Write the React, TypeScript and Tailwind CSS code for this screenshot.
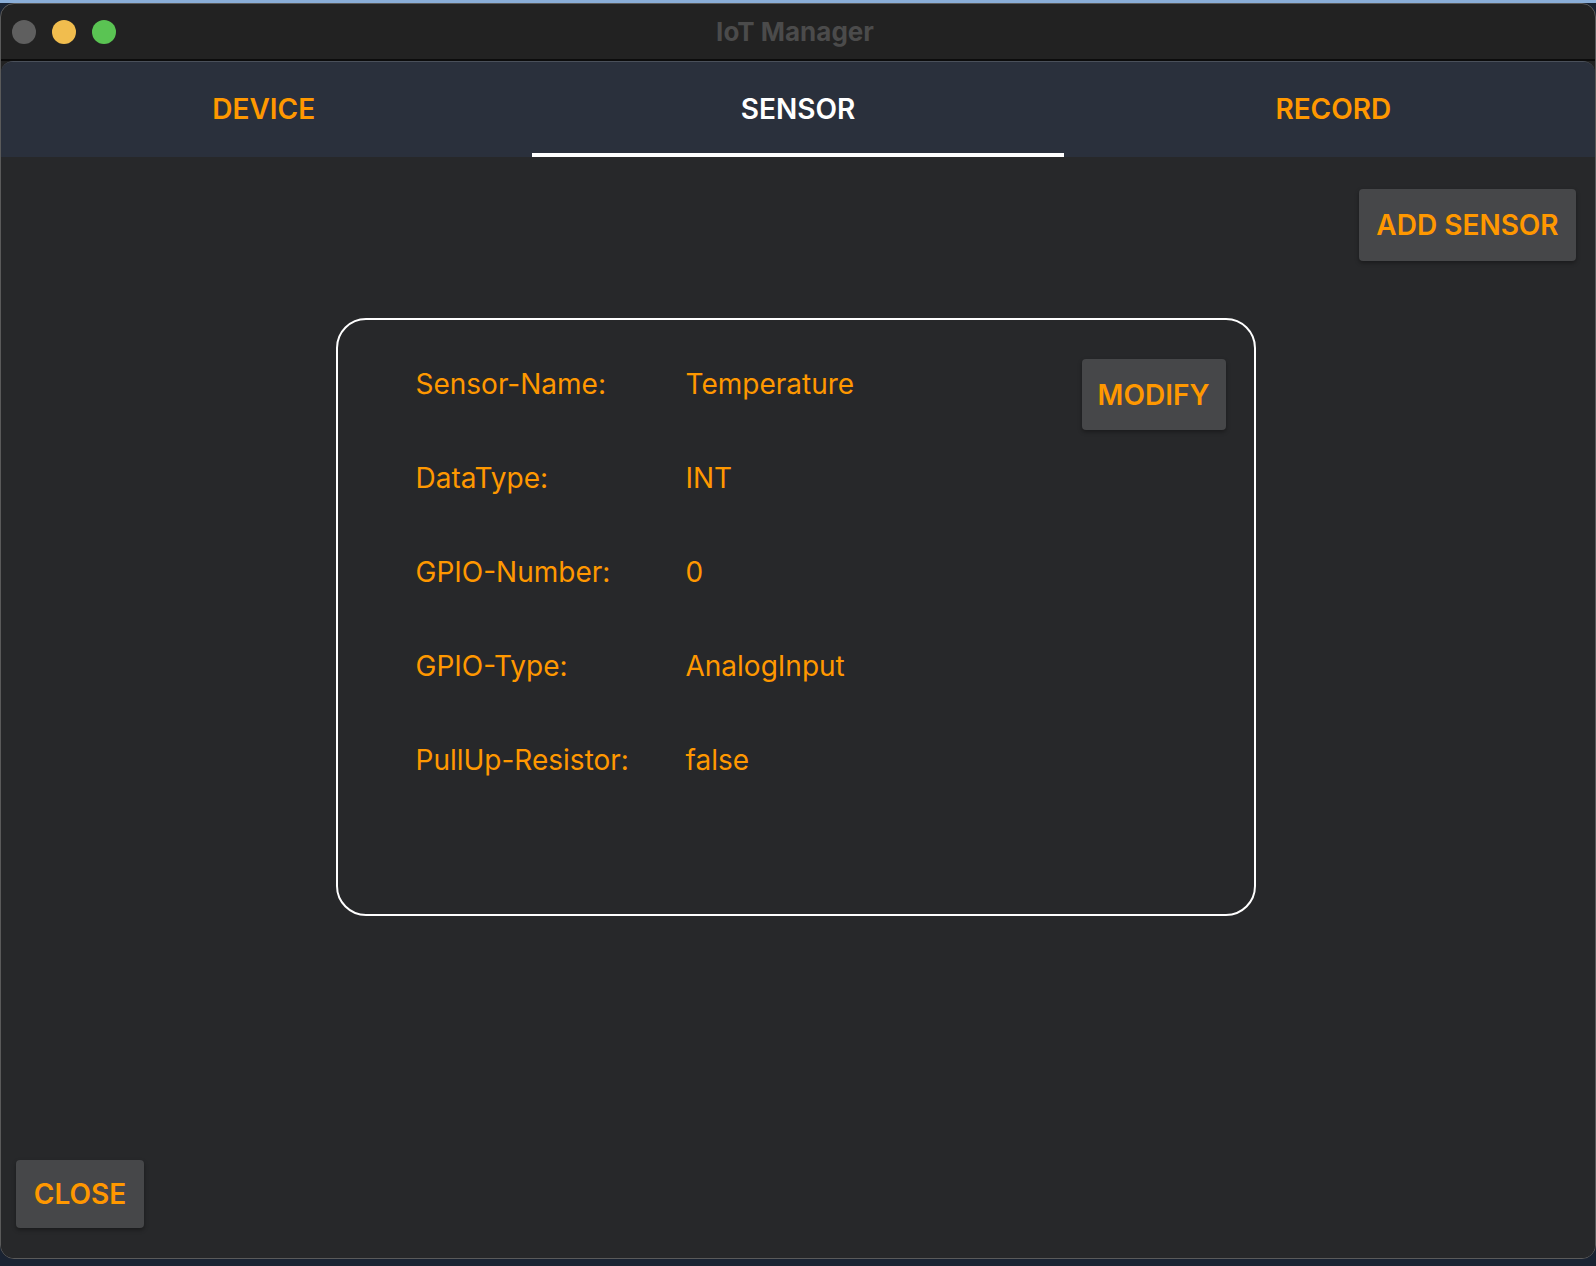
import React from "react";

const rows: [string, string][] = [
  ["Sensor-Name:", "Temperature"],
  ["DataType:", "INT"],
  ["GPIO-Number:", "0"],
  ["GPIO-Type:", "AnalogInput"],
  ["PullUp-Resistor:", "false"],
];

export default function App() {
  return (
    <div
      className="w-[1596px] h-[1266px] flex flex-col bg-[#1a2332] overflow-hidden"
      style={{ fontFamily: "Inter, Roboto, 'Noto Sans', sans-serif" }}
    >
      <div className="h-[3px] bg-[#8aaed8] shrink-0" />
      <div className="h-[1256px] shrink-0 flex flex-col rounded-[14px] border border-[#5a5a5a] bg-[#222222] overflow-hidden">
        {/* title bar */}
        <div className="h-[55px] shrink-0 relative flex items-center">
          <div className="flex items-center gap-[16px] pl-[11px]">
            <div className="w-[24px] h-[24px] rounded-full bg-[#5f5f5f]" />
            <div className="w-[24px] h-[24px] rounded-full bg-[#f1bd4e]" />
            <div className="w-[24px] h-[24px] rounded-full bg-[#5ac453]" />
          </div>
          <div className="absolute inset-0 flex items-center justify-center pr-[6px] pb-[1px] text-[26px] font-bold text-[#4b4b4b]">
            IoT Manager
          </div>
        </div>
        <div className="h-[2px] bg-[#0c0c0c] shrink-0" />
        {/* content */}
        <div className="flex-1 flex flex-col rounded-t-[12px] border-t border-[#4a505a] bg-[#27282a] overflow-hidden">
          {/* tabs */}
          <div className="h-[95px] shrink-0 grid grid-cols-3 bg-[#2a303c]">
            <div className="flex items-center justify-center pr-[6px] pb-[2px] text-[28px] font-semibold text-[#ff9800]">DEVICE</div>
            <div className="relative flex items-center justify-center pb-[2px] text-[28px] font-semibold text-white">
              SENSOR
              <div className="absolute left-0 right-0 bottom-0 h-[4px] bg-white" />
            </div>
            <div className="flex items-center justify-center pl-[8px] pb-[2px] text-[28px] font-semibold text-[#ff9800]">RECORD</div>
          </div>
          {/* body */}
          <div className="flex-1 flex flex-col pt-[32px] pb-[30px] pl-[15px] pr-[16px]">
            <div className="flex justify-end pr-[3px]">
              <button className="w-[217px] h-[72px] rounded-[4px] bg-[#464749] shadow-[0_2px_4px_rgba(0,0,0,0.35)] text-[28px] font-semibold text-[#ff9800]">
                ADD SENSOR
              </button>
            </div>
            <div className="flex justify-center mt-[57px] pr-[4px]">
              <div className="w-[920px] h-[598px] rounded-[30px] border-2 border-white relative pl-[78px] pt-[46px]">
                <div className="flex flex-col gap-[59px]">
                  {rows.map(([k, v]) => (
                    <div key={k} className="flex items-center h-[35px] text-[28px] text-[#ff9800]">
                      <div className="w-[270px]">{k}</div>
                      <div>{v}</div>
                    </div>
                  ))}
                </div>
                <button className="absolute top-[39px] right-[28px] w-[144px] h-[71px] rounded-[4px] bg-[#464749] shadow-[0_2px_4px_rgba(0,0,0,0.35)] text-[28px] font-semibold text-[#ff9800]">
                  MODIFY
                </button>
              </div>
            </div>
            <div className="mt-auto">
              <button className="w-[128px] h-[68px] rounded-[4px] bg-[#464749] shadow-[0_2px_4px_rgba(0,0,0,0.35)] text-[28px] font-semibold text-[#ff9800]">
                CLOSE
              </button>
            </div>
          </div>
        </div>
      </div>
    </div>
  );
}
